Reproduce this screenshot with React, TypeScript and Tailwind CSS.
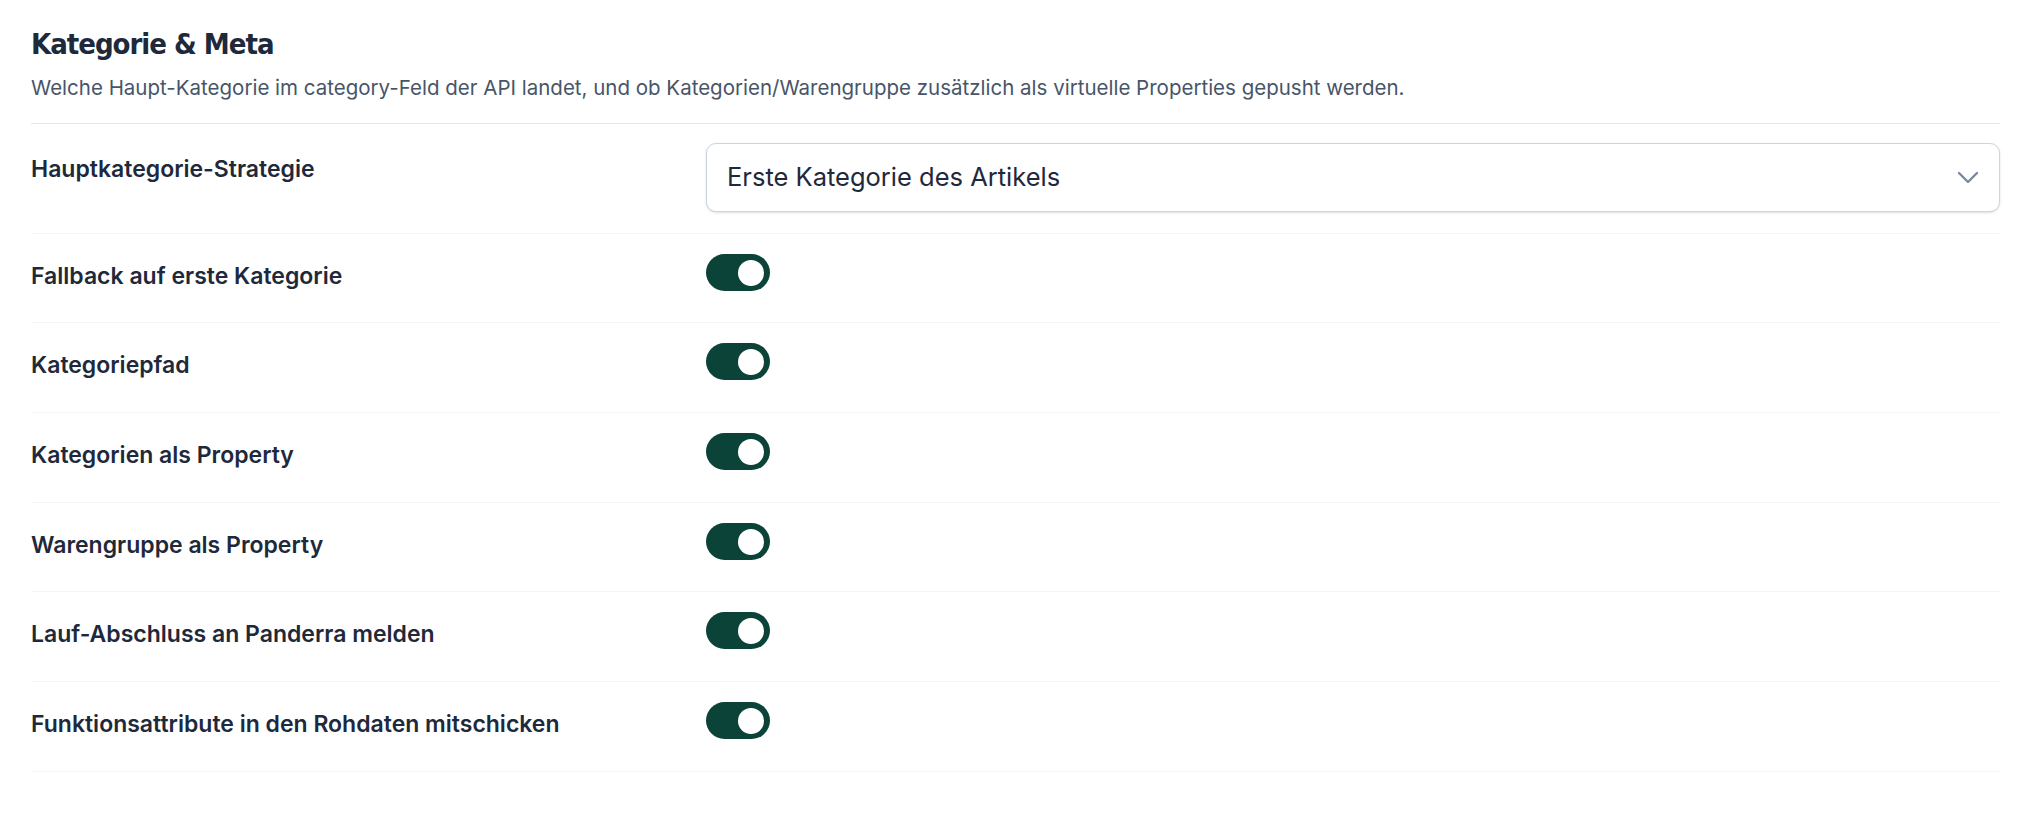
import React from "react";

const rows: [string, number][] = [
  ["Fallback auf erste Kategorie", 89],
  ["Kategoriepfad", 90],
  ["Kategorien als Property", 90],
  ["Warengruppe als Property", 89],
  ["Lauf-Abschluss an Panderra melden", 90],
  ["Funktionsattribute in den Rohdaten mitschicken", 90],
];

function Toggle() {
  return (
    <div className="flex h-[37px] w-[64px] items-center justify-end rounded-full bg-[#0b4338] pr-[6px]">
      <div className="h-[26px] w-[26px] rounded-full bg-white" />
    </div>
  );
}

export default function App() {
  return (
    <div
      className="min-h-screen bg-white pl-[31px]"
      style={{ fontFamily: "Inter, 'Noto Sans', sans-serif" }}
    >
      <div className="w-[1969px]">
        <div className="border-b border-[#e2e8f0] pb-[21px] pt-[26px]">
          <h1
            className="text-[29px] font-bold leading-[36px] tracking-[-0.035em] text-[#1e293b]"
            style={{ fontFamily: "'Liberation Sans Narrow', 'DejaVu Sans Condensed', sans-serif" }}
          >
            Kategorie &amp; Meta
          </h1>
          <p className="mt-[12px] text-[20.5px] leading-[28px] text-[#475569]">
            Welche Haupt-Kategorie im category-Feld der API landet, und ob Kategorien/Warengruppe zusätzlich als virtuelle Properties gepusht werden.
          </p>
        </div>

        <div className="grid h-[110px] grid-cols-[675px_1fr] border-b border-[#f1f5f9]">
          <div className="pt-[30px] text-[23px] font-semibold leading-[30px] text-[#1e293b]">
            Hauptkategorie-Strategie
          </div>
          <div className="pt-[19px]">
            <div className="flex h-[69px] items-center justify-between rounded-[10px] border border-[#cbd5e1] bg-white pl-[20px] pr-[20px] shadow-sm">
              <span className="text-[25.5px] text-[#1e293b]">Erste Kategorie des Artikels</span>
              <svg width="22" height="13" viewBox="0 0 22 13" fill="none">
                <path d="M2 2 L11 11 L20 2" stroke="#7a889e" strokeWidth="2.4" strokeLinecap="round" strokeLinejoin="round" />
              </svg>
            </div>
          </div>
        </div>

        {rows.map(([r, h]) => (
          <div
            key={r}
            className={`grid grid-cols-[675px_1fr] border-b border-[#f1f5f9] ${h === 90 ? "h-[90px]" : "h-[89px]"}`}
          >
            <div className="pt-[27px] text-[23px] font-semibold leading-[30px] text-[#1e293b]">{r}</div>
            <div className="pt-[20px]">
              <Toggle />
            </div>
          </div>
        ))}
      </div>
    </div>
  );
}
